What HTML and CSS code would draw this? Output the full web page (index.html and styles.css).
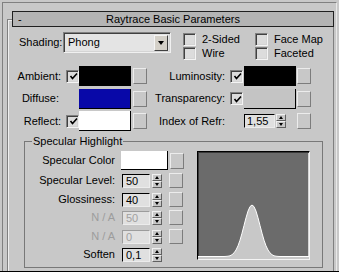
FILE: index.html
```html
<!DOCTYPE html>
<html>
<head>
<meta charset="utf-8">
<link rel="stylesheet" href="styles.css">
</head>
<body>
<div class="window">
  <div class="frame">
    <div class="rollout">
      <div class="title">
        <span class="collapse">-</span>
        <span class="title-text">Raytrace Basic Parameters</span>
        <span></span>
      </div>

      <div class="row-top">
        <span class="shading-lbl">Shading:</span>
        <div class="select">
          <span class="select-text">Phong</span>
          <span class="select-btn"><i class="tri-down"></i></span>
        </div>
        <div class="opts">
          <div class="opt"><span class="cb"></span>2-Sided</div>
          <div class="opt"><span class="cb"></span>Face Map</div>
          <div class="opt"><span class="cb"></span>Wire</div>
          <div class="opt"><span class="cb"></span>Faceted</div>
        </div>
      </div>

      <div class="mats">
        <div class="mat-row">
          <span class="lbl-l">Ambient:</span>
          <span class="cb-slot"><span class="cb checked"><svg width="9" height="9" viewBox="0 0 9 9"><path d="M1.5 4 L3.5 6.5 L8 1.5" fill="none" stroke="#000" stroke-width="1.6"/></svg></span></span>
          <span class="swatch sw-l black"></span>
          <span class="mapbtn ml-l"></span>
          <span class="lbl-r">Luminosity:</span>
          <span class="cb-slot"><span class="cb checked"><svg width="9" height="9" viewBox="0 0 9 9"><path d="M1.5 4 L3.5 6.5 L8 1.5" fill="none" stroke="#000" stroke-width="1.6"/></svg></span></span>
          <span class="swatch sw-r black"></span>
          <span class="mapbtn ml-r"></span>
        </div>
        <div class="mat-row">
          <span class="lbl-l nocb">Diffuse:</span>
          <span class="cb-slot"></span>
          <span class="swatch sw-l blue"></span>
          <span class="mapbtn ml-l"></span>
          <span class="lbl-r">Transparency:</span>
          <span class="cb-slot"><span class="cb checked"><svg width="9" height="9" viewBox="0 0 9 9"><path d="M1.5 4 L3.5 6.5 L8 1.5" fill="none" stroke="#000" stroke-width="1.6"/></svg></span></span>
          <span class="swatch sw-r gray"></span>
          <span class="mapbtn ml-r"></span>
        </div>
        <div class="mat-row">
          <span class="lbl-l">Reflect:</span>
          <span class="cb-slot"><span class="cb checked"><svg width="9" height="9" viewBox="0 0 9 9"><path d="M1.5 4 L3.5 6.5 L8 1.5" fill="none" stroke="#000" stroke-width="1.6"/></svg></span></span>
          <span class="swatch sw-l white"></span>
          <span class="mapbtn ml-l"></span>
          <span class="lbl-r">Index of Refr:</span>
          <span class="cb-slot"></span>
          <span class="field ior">1,55</span>
          <span class="spin ior-spin"><i><b class="up"></b></i><i><b class="down"></b></i></span>
          <span class="mapbtn ml-ior"></span>
        </div>
      </div>

      <div class="group">
        <span class="group-title">Specular Highlight</span>
        <div class="group-body">
          <div class="spec-col">
            <div class="spec-color-row">
              <span class="spec-lbl">Specular Color</span>
              <span class="swatch spec-sw white"></span>
              <span class="mapbtn spec-map"></span>
            </div>
            <div class="spin-rows">
              <div class="spin-row">
                <span class="spec-lbl">Specular Level:</span>
                <span class="field sfield">50</span>
                <span class="spin"><i><b class="up"></b></i><i><b class="down"></b></i></span>
                <span class="mapbtn row-map"></span>
              </div>
              <div class="spin-row">
                <span class="spec-lbl">Glossiness:</span>
                <span class="field sfield">40</span>
                <span class="spin"><i><b class="up"></b></i><i><b class="down"></b></i></span>
                <span class="mapbtn row-map"></span>
              </div>
              <div class="spin-row">
                <span class="spec-lbl dis">N / A</span>
                <span class="field sfield dis">50</span>
                <span class="spin"><i><b class="up"></b></i><i><b class="down"></b></i></span>
                <span class="mapbtn row-map"></span>
              </div>
              <div class="spin-row">
                <span class="spec-lbl dis">N / A</span>
                <span class="field sfield dis">0</span>
                <span class="spin"><i><b class="up"></b></i><i><b class="down"></b></i></span>
                <span class="mapbtn row-map"></span>
              </div>
              <div class="spin-row">
                <span class="spec-lbl">Soften</span>
                <span class="field sfield">0,1</span>
                <span class="spin"><i><b class="up"></b></i><i><b class="down"></b></i></span>
              </div>
            </div>
          </div>
          <div class="graph">
            <svg width="111" height="107" viewBox="0 0 111 107">
              <path d="M0,107 L0,104.5 L26,104.5 L28,104.4 L30,104.2 L32,103.8 L34,102.7 L36,100.9 L38,98 L40,93.8 L42,88.2 L44,81.2 L46,73.5 L48,65.8 L50,59.1 L52,54.6 L54,53 L56,54.6 L58,59.1 L60,65.8 L62,73.5 L64,81.2 L66,88.2 L68,93.8 L70,98 L72,100.9 L74,102.7 L76,103.8 L78,104.2 L80,104.4 L82,104.5 L111,104.5 L111,107 Z" fill="#c8c8c8"/>
              <polyline points="0,104.5 26,104.5 28,104.4 30,104.2 32,103.8 34,102.7 36,100.9 38,98 40,93.8 42,88.2 44,81.2 46,73.5 48,65.8 50,59.1 52,54.6 54,53 56,54.6 58,59.1 60,65.8 62,73.5 64,81.2 66,88.2 68,93.8 70,98 72,100.9 74,102.7 76,103.8 78,104.2 80,104.4 82,104.5 111,104.5" fill="none" stroke="#fff" stroke-width="1"/>
            </svg>
          </div>
        </div>
      </div>
    </div>
  </div>
</div>
</body>
</html>
```

FILE: styles.css
```css
* { box-sizing: border-box; }

body {
  margin: 0;
  background: #c8c8c8;
  font: 11px/13px "Liberation Sans", Arial, sans-serif;
  color: #000;
}

.window {
  width: 339px;
  height: 272px;
  overflow: hidden;
  border-bottom: 1px solid #000;
}

.frame {
  margin: 2px 0 0 2px;
  width: 335px;
  height: 269px;
  border-top: 1px solid #808080;
  border-left: 1px solid #808080;
  border-right: 1px solid #e8e8e8;
  padding: 16px 0 0 4px;
}

.rollout {
  width: 327px;
  height: 253px;
  border: 1px solid #808080;
  border-bottom: none;
  box-shadow: inset 1px 1px 0 #f0f0f0;
}

/* title bar */
.title {
  margin: -9px 0 0 4px;
  width: 322px;
  height: 16px;
  border: 1px solid #202020;
  background: #b4b4b4;
  display: grid;
  grid-template-columns: 1fr auto 1fr;
  align-items: center;
}
.collapse { padding-left: 5px; justify-self: start; line-height: 12px; }
.title-text { line-height: 13px; }

/* shading row */
.row-top {
  display: flex;
  margin-top: 5px;
}
.shading-lbl {
  width: 44px;
  margin-left: 11px;
  height: 21px;
  display: flex;
  align-items: center;
}
.select {
  width: 108px;
  height: 21px;
  display: flex;
  align-items: center;
  border: 1px solid;
  border-color: #808080 #f0f0f0 #f0f0f0 #808080;
  box-shadow: inset 1px 1px 0 #404040, inset -1px -1px 0 #d4d4d4;
  background: #e4e4e4;
  padding: 0 2px 0 4px;
}
.select-text { flex: 1; }
.select-btn {
  width: 14px;
  height: 16px;
  border: 1px solid;
  border-color: #f4f4f4 #404040 #404040 #f4f4f4;
  background: #d4d0c8;
  display: flex;
  align-items: center;
  justify-content: center;
}
.tri-down {
  width: 0;
  height: 0;
  border-left: 3.5px solid transparent;
  border-right: 3.5px solid transparent;
  border-top: 4px solid #000;
}

.opts {
  margin: 1px 0 0 12px;
  display: grid;
  grid-template-columns: 72px auto;
  grid-auto-rows: 13px;
  row-gap: 1px;
}
.opt {
  display: flex;
  align-items: center;
  height: 13px;
}
.opt .cb { margin-right: 6px; }

/* checkbox */
.cb {
  width: 13px;
  height: 13px;
  border: 1px solid;
  border-color: #808080 #f4f4f4 #f4f4f4 #808080;
  box-shadow: inset 1px 1px 0 #404040, inset -1px -1px 0 #d4d4d4;
  background: #dcdcdc;
  display: flex;
  align-items: center;
  justify-content: center;
  flex: none;
}
.cb svg { display: block; margin: 1px 0 0 1px; }

/* material rows */
.mats {
  margin-top: 6px;
  display: flex;
  flex-direction: column;
  gap: 2.5px;
}
.mat-row {
  display: flex;
  align-items: center;
  height: 20px;
}
.lbl-l { width: 53px; text-align: right; }
.lbl-l.nocb { padding-right: 2px; }
.lbl-r { width: 78px; text-align: right; }
.cb-slot { width: 13px; height: 13px; margin-left: 5px; flex: none; }

.swatch {
  width: 52px;
  height: 20px;
  border-right: 1px solid #000;
  border-bottom: 1px solid #000;
  flex: none;
}
.sw-r { margin-left: 1px; }
.black { background: #000; }
.blue { background: #0808a8; }
.white { background: #fff; }
.gray { background: #c4c4c4; }

.mapbtn {
  width: 14px;
  height: 16px;
  border: 1px solid;
  border-color: #ececec #7c7c7c #7c7c7c #ececec;
  background: #c8c8c8;
  flex: none;
}
.ml-l { margin-left: 2px; }
.ml-r { margin-left: 1px; }
.ml-ior { margin-left: 11px; }

/* fields and spinners */
.field {
  height: 14px;
  border: 1px solid;
  border-color: #000 #ececec #ececec #000;
  background: #e0e0e0;
  padding-left: 3px;
  line-height: 12px;
  flex: none;
}
.field.dis {
  color: #a0a0a0;
  border-color: #9c9c9c #ececec #ececec #9c9c9c;
}
.ior { width: 31px; margin-left: 1px; padding-left: 2px; }

.spin {
  width: 10px;
  height: 14px;
  display: flex;
  flex-direction: column;
  flex: none;
  margin-left: 2px;
}
.ior-spin { margin-left: 1px; }
.spin i {
  flex: 1;
  display: flex;
  align-items: center;
  justify-content: center;
  border: 1px solid;
  border-color: #f0f0f0 #606060 #606060 #f0f0f0;
  background: #c8c8c8;
}
.spin b { width: 0; height: 0; border-left: 2.5px solid transparent; border-right: 2.5px solid transparent; }
.spin b.up { border-bottom: 3px solid #000; }
.spin b.down { border-top: 3px solid #000; }

/* specular group */
.group {
  margin: 10px 0 0 16px;
  width: 299px;
  height: 127px;
  border: 1px solid #787878;
  display: flex;
  flex-direction: column;
}
.group-title {
  align-self: flex-start;
  margin: -7px 0 0 7px;
  padding: 0 1px;
  background: #c8c8c8;
  line-height: 13px;
}
.group-body {
  display: flex;
  margin-top: 3px;
}
.spec-col {
  width: 172px;
  display: flex;
  flex-direction: column;
}
.spec-lbl { width: 90px; text-align: right; flex: none; }
.spec-lbl.dis { color: #9c9c9c; }
.spec-color-row {
  display: flex;
  align-items: center;
  height: 19px;
}
.spec-sw { width: 47px; height: 19px; margin-left: 6px; }
.spec-map { margin-left: 2px; }

.spin-rows {
  margin-top: 4px;
  display: flex;
  flex-direction: column;
  gap: 4.5px;
}
.spin-row {
  display: flex;
  align-items: flex-start;
  height: 14px;
}
.sfield { width: 28px; margin-left: 7px; }
.row-map { margin-left: 7px; height: 15px; margin-top: -1px; }

.graph {
  width: 113px;
  height: 109px;
  background: #6b6b6b;
  border: 1px solid;
  border-color: #000 #f4f4f4 #f4f4f4 #000;
  box-shadow: inset 1px 1px 0 #383838, inset -1px -1px 0 #d4d4d4;
}
.graph svg { display: block; }
```
